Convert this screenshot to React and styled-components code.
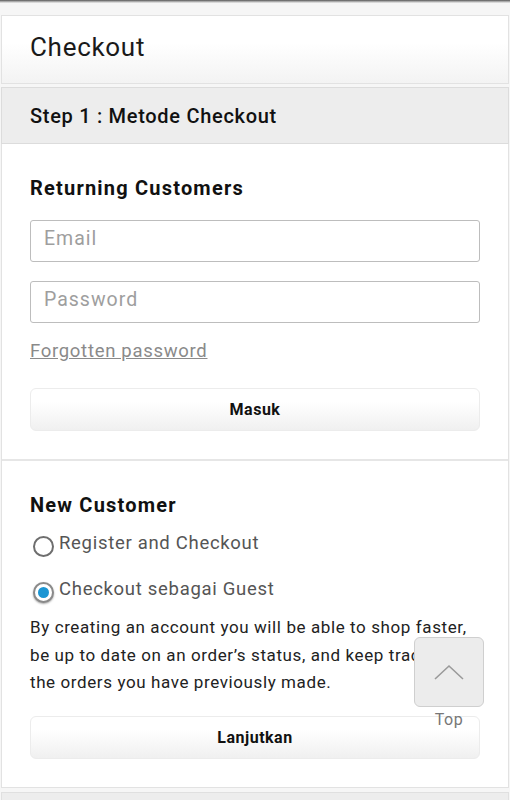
import React, { useState } from 'react';
import styled, { createGlobalStyle } from 'styled-components';

const GlobalStyle = createGlobalStyle`
  html, body {
    margin: 0;
    padding: 0;
    background: #f6f6f6;
    font-family: Roboto, "Liberation Sans", Arial, sans-serif;
    color: #222;
  }
  * { box-sizing: border-box; }
`;

const Page = styled.div`
  width: 510px;
  min-height: 800px;
  position: relative;
  overflow: hidden;
`;

const TopShade = styled.div`
  height: 3px;
  background: linear-gradient(#555, #bbb 60%, #eee);
`;

const Main = styled.div`
  padding: 12px 1px 0 1px;
  display: flex;
  flex-direction: column;
`;

const TitleCard = styled.div`
  height: 69px;
  border: 1px solid #e2e2e2;
  background: linear-gradient(#fff 40%, #f3f3f3);
  display: flex;
  align-items: center;
  padding: 0 28px 5px;
  font-size: 26px;
  letter-spacing: 0.7px;
  color: #1a1a1a;
`;

const StepBar = styled.div`
  margin-top: 3px;
  height: 57px;
  border: 1px solid #dcdcdc;
  background: #ededed;
  display: flex;
  align-items: center;
  padding: 0 28px;
  font-size: 20px;
  font-weight: 500;
  letter-spacing: 0.7px;
  color: #111;
`;

const Card = styled.div`
  background: #fff;
  border: 1px solid #e2e2e2;
  border-top: none;
`;

const Section = styled.div`
  padding: 32px 28px 28px;
  border-bottom: ${(p) => (p.$last ? 'none' : '2px solid #e6e6e6')};
  display: flex;
  flex-direction: column;
`;

const Heading = styled.h3`
  margin: 0 0 ${(p) => p.$gap || '20px'};
  font-size: 20px;
  font-weight: 700;
  letter-spacing: 1.2px;
  color: #111;
  line-height: 24px;
`;

const Input = styled.input`
  width: 100%;
  height: 42px;
  border: 1px solid #bdbdbd;
  border-radius: 3px;
  padding: 0 13px 5px;
  font-family: inherit;
  font-size: 19.5px;
  letter-spacing: 1px;
  color: #333;
  background: #fff;
  margin-bottom: ${(p) => p.$gap || '0'};
  &::placeholder {
    color: #9e9e9e;
  }
`;

const ForgotLink = styled.a`
  margin-top: 17px;
  font-size: 18.5px;
  letter-spacing: 0.7px;
  color: #8a8a8a;
  text-decoration: underline;
  align-self: flex-start;
  line-height: 22px;
`;

const Button = styled.button`
  width: 100%;
  height: 43px;
  margin-top: ${(p) => p.$top || '0'};
  border: 1px solid #ececec;
  border-radius: 6px;
  background: linear-gradient(#fff 30%, #f0f0f0);
  font-family: inherit;
  font-size: 16px;
  font-weight: 700;
  letter-spacing: 0.5px;
  color: #111;
`;

const RadioRow = styled.label`
  display: flex;
  align-items: center;
  gap: 5px;
  height: 28px;
  margin-bottom: ${(p) => p.$gap || '0'};
  font-size: 18.5px;
  letter-spacing: 0.7px;
  color: #555;
`;

const RadioCircle = styled.span`
  width: 21px;
  height: 21px;
  margin-top: 7px;
  margin-left: 3px;
  border-radius: 50%;
  border: 2px solid #6e6e6e;
  background: #fff;
  display: flex;
  align-items: center;
  justify-content: center;
  box-shadow: ${(p) => (p.$checked ? '0 1px 2px rgba(0,0,0,0.35)' : 'none')};
  border-color: ${(p) => (p.$checked ? '#8a8a8a' : '#6e6e6e')};
  &::after {
    content: '';
    display: ${(p) => (p.$checked ? 'block' : 'none')};
    width: 11px;
    height: 11px;
    border-radius: 50%;
    background: #1b95d3;
  }
`;

const Paragraph = styled.p`
  margin: 11px 0 0;
  font-size: 17px;
  letter-spacing: 0.6px;
  line-height: 27.5px;
  color: #222;
`;

const TopButton = styled.div`
  position: absolute;
  left: 414px;
  top: 637px;
  width: 70px;
  display: flex;
  flex-direction: column;
  align-items: center;
`;

const TopBox = styled.div`
  width: 70px;
  height: 70px;
  border: 1px solid #cfcfcf;
  border-radius: 6px;
  background: #ececec;
  display: flex;
  align-items: center;
  justify-content: center;
`;

const TopLabel = styled.span`
  margin-top: 3px;
  font-size: 16px;
  letter-spacing: 0.5px;
  color: #777;
`;

const BottomBar = styled.div`
  margin-top: 4px;
  height: 20px;
  border: 1px solid #e0e0e0;
  background: #ededed;
`;

export default function App() {
  const [mode, setMode] = useState('guest');
  return (
    <Page>
      <GlobalStyle />
      <TopShade />
      <Main>
        <TitleCard>Checkout</TitleCard>
        <StepBar>Step 1 : Metode Checkout</StepBar>
        <Card>
          <Section>
            <Heading>Returning Customers</Heading>
            <Input placeholder="Email" $gap="19px" />
            <Input placeholder="Password" type="password" />
            <ForgotLink>Forgotten password</ForgotLink>
            <Button $top="26px">Masuk</Button>
          </Section>
          <Section $last>
            <Heading $gap="12px">New Customer</Heading>
            <RadioRow $gap="18px" onClick={() => setMode('register')}>
              <RadioCircle $checked={mode === 'register'} />
              Register and Checkout
            </RadioRow>
            <RadioRow onClick={() => setMode('guest')}>
              <RadioCircle $checked={mode === 'guest'} />
              Checkout sebagai Guest
            </RadioRow>
            <Paragraph>
              By creating an account you will be able to shop faster, be up to date on an
              order’s status, and keep track of the orders you have previously made.
            </Paragraph>
            <Button $top="19px">Lanjutkan</Button>
          </Section>
        </Card>
        <BottomBar />
      </Main>
      <TopButton>
        <TopBox>
          <svg width="30" height="16" viewBox="0 0 30 16">
            <polyline points="1,15 15,2 29,15" fill="none" stroke="#9a9a9a" strokeWidth="1.6" />
          </svg>
        </TopBox>
        <TopLabel>Top</TopLabel>
      </TopButton>
    </Page>
  );
}
